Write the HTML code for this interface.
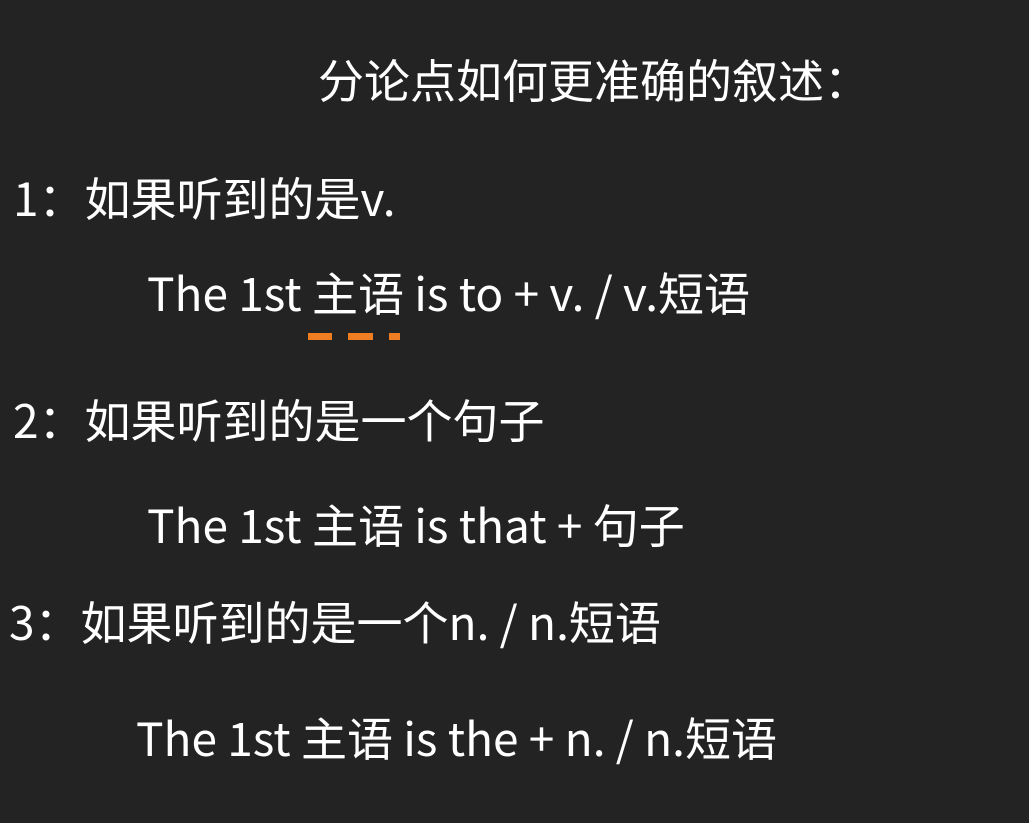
<!DOCTYPE html>
<html><head><meta charset="utf-8"><style>
html,body{margin:0;padding:0;}
body{width:1029px;height:823px;background:#232323;position:relative;overflow:hidden;font-family:"Noto Sans CJK SC","Liberation Sans",sans-serif;color:#fff;}
.t{position:absolute;font-size:46px;line-height:46px;white-space:nowrap;}
.d{position:absolute;background:#ef7d22;height:7px;top:333px;}
</style></head><body>
<div class="t" style="left:318px;top:56px;">分论点如何更准确的叙述：</div>
<div class="t" style="left:13px;top:174px;">1：如果听到的是v.</div>
<div class="t" style="left:147px;top:269px;">The 1st 主语 is to + v. / v.短语</div>
<div class="d" style="left:308px;width:24px;"></div>
<div class="d" style="left:348px;width:25px;"></div>
<div class="d" style="left:389px;width:11px;"></div>
<div class="t" style="left:13px;top:396px;">2：如果听到的是一个句子</div>
<div class="t" style="left:147px;top:501px;">The 1st 主语 is that + 句子</div>
<div class="t" style="left:9px;top:598px;">3：如果听到的是一个n. / n.短语</div>
<div class="t" style="left:136px;top:714px;">The 1st 主语 is the + n. / n.短语</div>
</body></html>
